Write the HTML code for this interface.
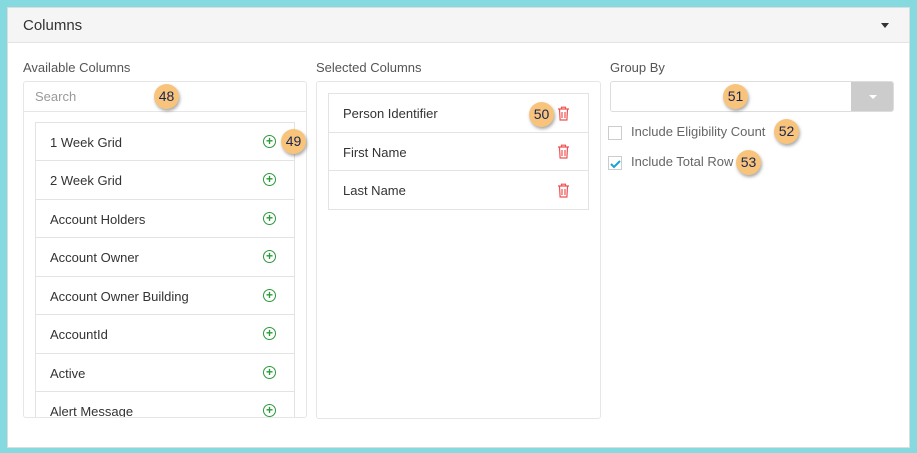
<!DOCTYPE html>
<html><head><style>
*{box-sizing:border-box;margin:0;padding:0}
body{width:917px;height:453px;background:#84dadf;font-family:"Liberation Sans",sans-serif;position:relative;overflow:hidden}
.card{position:absolute;left:7px;top:7px;width:903px;height:441px;background:#fff;border:1px solid #ddd}
.hdr{position:absolute;left:0;top:0;width:100%;height:35px;background:#f5f5f5;border-bottom:1px solid #e3e3e3;font-size:15px;color:#333;padding:9px 15px}
.caret{position:absolute;right:20px;top:15px;width:0;height:0;border-left:4px solid transparent;border-right:4px solid transparent;border-top:5px solid #333}
.a{position:absolute}
.lbl{font-size:13px;color:#555}
.panel{border:1px solid #e6e6e6;border-radius:3px}
.item{position:absolute;border:1px solid #e3e3e3;background:#fff;font-size:13px;color:#333;padding-left:14px;display:flex;align-items:center;height:40px}
.plus{position:absolute;width:13px;height:13px;border:1.3px solid #2a9a3a;border-radius:50%;color:#2a9a3a;font-size:12px;line-height:10px;text-align:center;font-weight:bold}
.badge{position:absolute;width:25px;height:25px;border-radius:50%;background:#f8c47c;box-shadow:1px 2px 3px rgba(0,0,0,.35);font-size:14px;color:#1a2550;text-align:center;line-height:25px}
.cb{position:absolute;width:14px;height:14px;border:1px solid #ccc;background:#fff}
</style></head><body>
<div class="card">
<div class="hdr">Columns<div class="caret"></div></div>
</div>
<div class="a lbl" style="left:23px;top:60px">Available Columns</div>
<div class="a panel" style="left:23px;top:81px;width:284px;height:337px"></div>
<div class="a" style="left:23px;top:111px;width:284px;border-top:1px solid #e6e6e6"></div>
<div class="a" style="left:35px;top:89px;font-size:13px;color:#999">Search</div>
<div class="badge" style="left:154px;top:84px">48</div>

<div class="a" style="left:35px;top:122px;width:261px;height:295px;overflow:hidden">
<div class="item" style="left:0;top:0;width:260px">1 Week Grid</div>
<div class="item" style="left:0;top:38px;width:260px">2 Week Grid</div>
<div class="item" style="left:0;top:77px;width:260px">Account Holders</div>
<div class="item" style="left:0;top:115px;width:260px">Account Owner</div>
<div class="item" style="left:0;top:154px;width:260px">Account Owner Building</div>
<div class="item" style="left:0;top:192px;width:260px">AccountId</div>
<div class="item" style="left:0;top:231px;width:260px">Active</div>
<div class="item" style="left:0;top:269px;width:260px">Alert Message</div>
</div>
<div class="plus" style="left:263px;top:135px">+</div>
<div class="plus" style="left:263px;top:173px">+</div>
<div class="plus" style="left:263px;top:212px">+</div>
<div class="plus" style="left:263px;top:250px">+</div>
<div class="plus" style="left:263px;top:289px">+</div>
<div class="plus" style="left:263px;top:327px">+</div>
<div class="plus" style="left:263px;top:366px">+</div>
<div class="plus" style="left:263px;top:404px">+</div>
<div class="badge" style="left:281px;top:129px">49</div>

<div class="a lbl" style="left:316px;top:60px">Selected Columns</div>
<div class="a panel" style="left:316px;top:81px;width:285px;height:338px"></div>
<div class="item" style="left:328px;top:93px;width:261px">Person Identifier</div>
<div class="item" style="left:328px;top:132px;width:261px">First Name</div>
<div class="item" style="left:328px;top:170px;width:261px">Last Name</div>
<svg class="a" style="left:557px;top:106px" width="13" height="15" viewBox="0 0 13 15"><g fill="none" stroke="#f05050" stroke-width="1.2"><path d="M1 3h11M4.5 3V1.2h4V3M2.5 3.5l.6 10.5h6.8l.6-10.5M5 6v6M8 6v6"/></g></svg>
<svg class="a" style="left:557px;top:144px" width="13" height="15" viewBox="0 0 13 15"><g fill="none" stroke="#f05050" stroke-width="1.2"><path d="M1 3h11M4.5 3V1.2h4V3M2.5 3.5l.6 10.5h6.8l.6-10.5M5 6v6M8 6v6"/></g></svg>
<svg class="a" style="left:557px;top:183px" width="13" height="15" viewBox="0 0 13 15"><g fill="none" stroke="#f05050" stroke-width="1.2"><path d="M1 3h11M4.5 3V1.2h4V3M2.5 3.5l.6 10.5h6.8l.6-10.5M5 6v6M8 6v6"/></g></svg>
<div class="badge" style="left:529px;top:102px">50</div>

<div class="a lbl" style="left:610px;top:60px">Group By</div>
<div class="a" style="left:610px;top:81px;width:284px;height:31px;border:1px solid #ddd;border-radius:3px;overflow:hidden"><div class="a" style="right:0;top:0;width:42px;height:31px;background:#ccc"></div></div>
<div class="a" style="left:869px;top:95px;width:0;height:0;border-left:4px solid transparent;border-right:4px solid transparent;border-top:4px solid #fff"></div>
<div class="badge" style="left:723px;top:84px">51</div>
<div class="cb" style="left:608px;top:126px"></div>
<div class="a" style="left:631px;top:124px;font-size:13px;color:#666">Include Eligibility Count</div>
<div class="badge" style="left:774px;top:119px">52</div>
<div class="cb" style="left:608px;top:156px"></div>
<svg class="a" style="left:609px;top:157px" width="13" height="13" viewBox="0 0 13 13"><path d="M2 7l3 3 6-6" fill="none" stroke="#1ca0d8" stroke-width="2"/></svg>
<div class="a" style="left:631px;top:154px;font-size:13px;color:#666">Include Total Row</div>
<div class="badge" style="left:736px;top:150px">53</div>
</body></html>
